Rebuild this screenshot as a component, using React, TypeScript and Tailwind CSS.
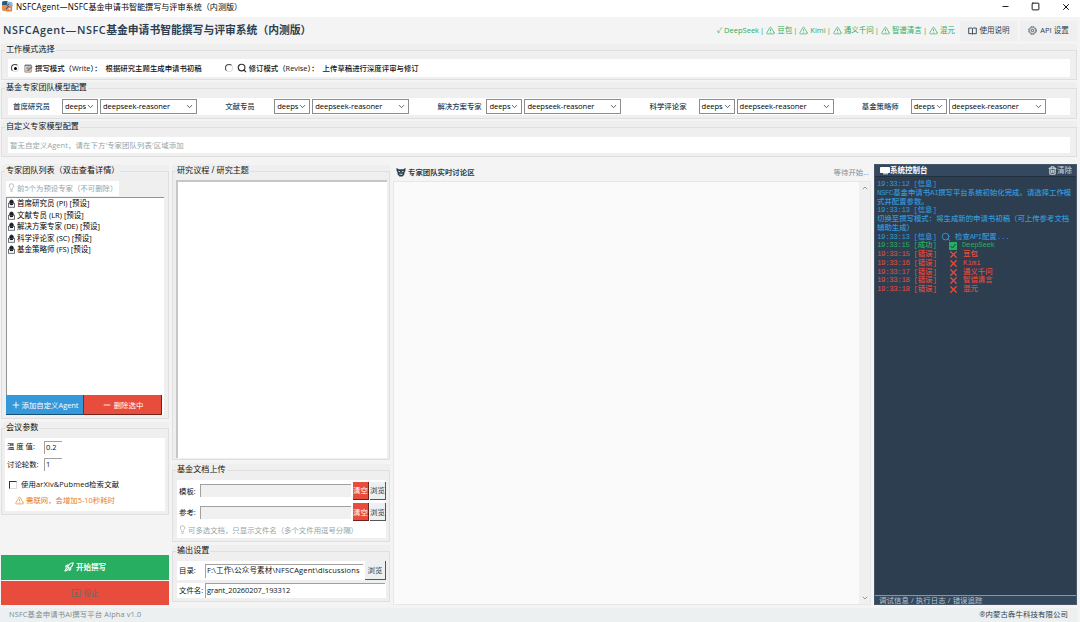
import type { ReactNode } from "react";
import { ChevronDown, ChevronUp, Lightbulb, Minus, Plus, Rocket, Search, Square, Trash2, TriangleAlert, X } from "lucide-react";

const sans = "font-['Open_Sans','Noto_Sans_CJK_SC',sans-serif]";
const mono = "font-['Liberation_Mono','Noto_Sans_CJK_SC',monospace]";

function Group({ title, className = "", children }: { title: string; className?: string; children: ReactNode }) {
  return (
    <section className={`relative shrink-0 bg-[#efefef] pt-[6px] ${className}`}>
      <div className="h-full border border-[#dfdfdf]">{children}</div>
      <h2 className="absolute left-[4px] top-[-1px] bg-[#efefef] px-px text-[8.1px] leading-[11px] text-[#111]">{title}</h2>
    </section>
  );
}

function Select({ value, className }: { value: string; className: string }) {
  return (
    <div className={`flex h-[15px] items-center justify-between border border-[#8c8c8c] bg-white pl-[2px] pr-[2px] text-[7.6px] text-black ${className}`}>
      <span className="pb-[2px] font-medium tracking-[-0.07px]">{value}</span>
      <ChevronDown size={9} strokeWidth={2.2} className="shrink-0 text-[#444]" />
    </div>
  );
}

function Entry({ className = "", children }: { className?: string; children?: ReactNode }) {
  return <div className={`flex items-center overflow-hidden whitespace-nowrap border-l border-t border-[#a0a0a0] pb-[2px] pl-px text-[7.5px] text-[#111] ${className}`}>{children}</div>;
}

function Raised({ className = "", children }: { className?: string; children: ReactNode }) {
  return <button className={`flex shrink-0 items-center justify-center overflow-hidden whitespace-nowrap border-b border-r text-[7.4px] ${className}`}>{children}</button>;
}

const experts = [
  { name: "首席研究员", code: "PI" },
  { name: "文献专员", code: "LR" },
  { name: "解决方案专家", code: "DE" },
  { name: "科学评论家", code: "SC" },
  { name: "基金策略师", code: "FS" },
];

function LockIcon() {
  return (
    <svg viewBox="0 0 8 10" className="h-[9px] w-[7px] shrink-0">
      <path d="M2 5V3a2 2 0 0 1 4 0v2z" fill="#26181a" stroke="#222" strokeWidth="1" />
      <rect x=".6" y="4.8" width="6.8" height="4.5" fill="#fff" stroke="#54616f" strokeWidth="1" />
      <path d="M2.2 5h3.6v1.8H2.2z" fill="#1e1616" />
    </svg>
  );
}

function AppIcon() {
  return (
    <svg viewBox="0 0 12 12" className="h-[11px] w-[11px]">
      <rect x="0" y="0" width="11.5" height="11.5" rx="2" fill="#e8eef4" />
      <path d="M0 2Q0 0 2 0h4v5H0z" fill="#24618e" />
      <path d="M0 5h6v6H2Q0 11 0 9z" fill="#ef8f43" />
      <path d="M6 1h4q1.500 0 1.500 2v3H6z" fill="#8cb8dc" />
      <path d="M5 5h6v5q0 1.500-1.500 1.500H5z" fill="#f27c38" />
      <path d="M2 4l2-2 2 3 2-2M4 9l3-3 3 3" fill="none" stroke="#244f79" strokeWidth="1" />
      <path d="M8.500 7v3M7 8.500h3" stroke="#fff" strokeWidth=".8" />
    </svg>
  );
}

function MemoIcon() {
  return (
    <svg viewBox="0 0 10 10" className="h-[9px] w-[9px]">
      <path d="M1 1.200h7v7.800H1z" fill="#eee" stroke="#666" strokeWidth=".8" />
      <path d="M1 1.500h7M2.500 3.500h4M2.500 5.200h3M2.500 7h2" stroke="#555" strokeWidth=".8" />
      <path d="M4.800 7.200l4.200-4.500" stroke="#777" strokeWidth="1.600" />
      <path d="M4.500 7.600l1-1" stroke="#d0623a" strokeWidth="1.600" />
    </svg>
  );
}

function BookIcon() {
  return (
    <svg viewBox="0 0 10 9" className="h-[8px] w-[9px]">
      <path d="M.7 1.200h3.400l.9.5.9-.5h3.400v6.300H5.900L5 8l-.9-.5H.7zM5 1.700V8" fill="none" stroke="#2c3e50" strokeWidth="1" />
    </svg>
  );
}

function GearIcon() {
  return (
    <svg viewBox="0 0 10 10" className="h-[9px] w-[9px]">
      <circle cx="5" cy="5" r="4.200" fill="none" stroke="#2c3e50" strokeWidth="1" strokeDasharray="1.600 .6" />
      <circle cx="5" cy="5" r="3.300" fill="none" stroke="#2c3e50" strokeWidth=".5" />
      <circle cx="5" cy="5" r="1.300" fill="none" stroke="#2c3e50" strokeWidth=".9" />
    </svg>
  );
}

function MaskIcon() {
  return (
    <svg viewBox="0 0 10 10" className="h-[10px] w-[10px]">
      <path d="M.5.8l2 1.400h5l2-1.400v3l-.8 1.200-.5 2.800L6.500 9.500h-3L1.800 7.800 1.300 5 .5 3.800z" fill="#2c3e50" />
      <path d="M2.500 4.300l1.700.6M7.500 4.300l-1.700.6M3.500 7.200h3" stroke="#f4f4f4" strokeWidth=".9" />
    </svg>
  );
}

function Warn() {
  return <TriangleAlert size={9} strokeWidth={1.8} className="inline-block shrink-0" />;
}

const services = ["豆包", "Kimi", "通义千问", "智谱清言", "混元"];
const errors = [
  { time: "19:33:15", name: "豆包" },
  { time: "19:33:16", name: "Kimi" },
  { time: "19:33:17", name: "通义千问" },
  { time: "19:33:18", name: "智谱清言" },
  { time: "19:33:18", name: "混元" },
];

function Stamp({ time, level }: { time: string; level: string }) {
  return (
    <span className="inline-block w-[68px]">
      <span className="tracking-[-0.37px]">{time} [</span>{level}]
    </span>
  );
}

export default function App() {
  return (
    <div className={`flex h-[622px] w-[1080px] flex-col overflow-hidden whitespace-nowrap bg-[#f4f4f4] text-[7.5px] leading-[10px] text-[#111] ${sans}`}>
      <header className="flex h-[17px] shrink-0 items-center bg-white pb-[4px] pl-[2px]">
        <AppIcon />
        <span className="ml-[3px] text-[8.1px] text-black"><span className="tracking-[0.2px]">NSFCAgent—NSFC</span>基金申请书智能撰写与评审系统（内测版）</span>
        <div className="ml-auto flex items-center gap-[21px] pr-[9px] text-[#111]">
          <Minus size={9} strokeWidth={2.4} />
          <Square size={9} strokeWidth={2.6} />
          <X size={10} strokeWidth={2.4} />
        </div>
      </header>

      <div className="flex h-[27px] shrink-0 items-center pl-[3px] pr-[3px]">
        <h1 className="pb-px text-[10.8px] font-semibold leading-[14px] text-[#2c3e50]"><span className="tracking-[0.57px]">NSFCAgent—NSFC</span>基金申请书智能撰写与评审系统（内测版）</h1>
        <div className="ml-auto flex items-center pb-px text-[7.5px] text-[#27ae60]">
          <span>✓ DeepSeek</span>
          {services.map((s) => (
            <span key={s} className="flex items-center">
              <span className="pl-px pr-[2px]">|</span>
              <Warn />
              <span className="ml-[2px]">{s}</span>
            </span>
          ))}
        </div>
        <button className="ml-[5px] flex h-[20px] w-[57px] items-center justify-center gap-[3px] bg-[#efefef] text-[#2c3e50]">
          <BookIcon /><span className="pb-px">使用说明</span>
        </button>
        <button className="ml-[3px] flex h-[20px] w-[57px] items-center justify-center gap-[3px] bg-[#efefef] text-[#2c3e50]">
          <GearIcon /><span className="pb-px">API 设置</span>
        </button>
      </div>

      <div className="flex shrink-0 flex-col gap-[2px] pl-px pr-[3px]">
        <Group title="工作模式选择" className="h-[36px]">
          <div className="ml-[6px] mr-[6px] mt-[8px] flex h-[18px] items-center bg-white pl-[3px] text-[7.4px] font-medium">
            <i className="flex h-[8px] w-[8px] items-center justify-center rounded-full border border-[#ddd] border-l-[#444] border-t-[#444]"><b className="h-[3px] w-[3px] rounded-full bg-black" /></i>
            <span className="ml-[5px]"><MemoIcon /></span>
            <span className="ml-[2px]">撰写模式（Write）：</span>
            <span className="ml-[4px]">根据研究主题生成申请书初稿</span>
            <i className="ml-[23px] h-[8px] w-[8px] rounded-full border border-[#ddd] border-l-[#444] border-t-[#444]" />
            <Search size={10} strokeWidth={2.8} className="ml-[4px] text-[#333]" />
            <span className="ml-[2px]">修订模式（Revise）：</span>
            <span className="ml-[4px]">上传草稿进行深度评审与修订</span>
          </div>
        </Group>
        <Group title="基金专家团队模型配置" className="h-[37px]">
          <div className="ml-[6px] mr-[6px] mt-[9px] flex h-[17px] items-center bg-white pl-[5px]">
            {experts.map((e) => (
              <div key={e.code} className="flex w-[212.2px] shrink-0 items-center text-[#2c3e50]">
                <span className="w-[49px] pb-px text-[7.4px] font-medium">{e.name}</span>
                <Select value="deeps" className="w-[36px]" />
                <Select value="deepseek-reasoner" className="ml-[2px] w-[97px]" />
              </div>
            ))}
          </div>
        </Group>
        <Group title="自定义专家模型配置" className="h-[36px]">
          <div className="ml-[6px] mr-[6px] mt-[9px] flex h-[16px] items-center bg-white pb-px pl-[2px] text-[7.4px] tracking-[0.1px] text-[#95a5a6]">
            暂无自定义Agent，请在下方'专家团队列表'区域添加
          </div>
        </Group>
      </div>

      <main className="mt-[8px] flex h-[441px] shrink-0 pr-[3px]">
        <aside className="flex w-[169px] shrink-0 flex-col pl-px">
          <Group title="专家团队列表（双击查看详情）" className="h-[254px]">
            <div className="ml-[4px] mr-[4px] mt-[9px]">
              <div className="flex h-[15px] w-[113px] items-center bg-white pb-[2px] pl-px text-[7.4px] text-[#95a5a6]">
                <Lightbulb size={9} strokeWidth={1.8} className="shrink-0" /><span className="ml-px">前5个为预设专家（不可删除）</span>
              </div>
              <div className="mt-px h-[198px] border-l border-t border-[#929292] bg-white">
                {experts.map((e) => (
                  <div key={e.code} className="flex h-[11.5px] items-center gap-[2px] pl-px text-[7.5px] text-black">
                    <LockIcon /><span className="pb-px">{e.name} ({e.code}) [预设]</span>
                  </div>
                ))}
              </div>
              <div className="flex h-[20px] bg-white">
                <Raised className="w-[78px] gap-px border-[#174f78] bg-[#3498db] text-white"><Plus size={10} strokeWidth={2.2} />添加自定义Agent</Raised>
                <Raised className="w-[78px] gap-[2px] border-[#752018] bg-[#e74c3c] text-white"><Minus size={10} strokeWidth={2.2} />删除选中</Raised>
              </div>
            </div>
          </Group>

          <Group title="会议参数" className="mt-[3px] h-[93px]">
            <div className="ml-[3px] mr-[3px] mt-[9px] flex h-[73px] flex-col bg-white pl-[2px] text-[7.4px]">
              <div className="mt-[2px] flex h-[14px] items-center"><span className="w-[37px] pb-[2px]">温 度 值:</span><Entry className="h-[13px] w-[18px]">0.2</Entry></div>
              <div className="mt-[3px] flex h-[14px] items-center"><span className="w-[37px] pb-px">讨论轮数:</span><Entry className="h-[13px] w-[18px]">1</Entry></div>
              <div className="mt-[7px] flex h-[13px] items-center"><i className="ml-[2px] h-[8px] w-[8px] border border-[#ddd] border-l-[#333] border-t-[#333]" /><span className="ml-[4px] pb-[2px] tracking-[0.14px]">使用arXiv&amp;Pubmed检索文献</span></div>
              <div className="mt-[3px] flex h-[13px] items-center pb-px pl-[8px] text-[#e67e22]"><Warn /><span className="ml-[2px]">需联网，会增加5-10秒耗时</span></div>
            </div>
          </Group>
          <button className="mt-[40px] flex h-[25px] shrink-0 items-center justify-center gap-[2px] bg-[#27ae60] pb-px text-[7.5px] font-semibold text-white"><Rocket size={10} strokeWidth={2.6} />开始撰写</button>
          <button className="mt-px flex h-[24px] shrink-0 items-center justify-center gap-[3px] bg-[#e74c3c] text-[7.5px] font-semibold text-[#8a625c]">
            <i className="flex h-[8px] w-[9px] items-center justify-center border border-[#8a625c]"><b className="h-[3px] w-[3px] bg-[#8a625c]" /></i>停止
          </button>
        </aside>

        <section className="ml-[3px] flex w-[218px] shrink-0 flex-col">
          <Group title="研究议程 / 研究主题" className="h-[295px]">
            <div className="ml-[3px] mt-[8px] h-[278px] w-[211px] border-l-2 border-t-2 border-[#c6c6c6] bg-white" />
          </Group>
          <Group title="基金文档上传" className="mt-[4px] h-[78px]">
            <div className="ml-[4px] mt-[9px] h-[58px] w-[209px] bg-white text-[7.4px]">
              {["模板:", "参考:"].map((label) => (
                <div key={label} className="flex h-[21.500px] items-center pl-[2px]">
                  <span className="w-[21px] shrink-0">{label}</span>
                  <Entry className="h-[13px] w-[151px] bg-[#f0f0f0]" />
                  <Raised className="ml-[2px] h-[18px] w-[16px] border-[#752018] bg-[#e74c3c] text-white">清空</Raised>
                  <Raised className="ml-px h-[18px] w-[16px] border-[#555] bg-[#ecf0f1] text-[#2c3e50]">浏览</Raised>
                </div>
              ))}
              <div className="flex h-[15px] items-center pb-[2px] pl-px text-[#95a5a6]"><Lightbulb size={9} strokeWidth={1.8} className="shrink-0" /><span className="ml-px">可多选文档，只显示文件名（多个文件用逗号分隔）</span></div>
            </div>
          </Group>
          <Group title="输出设置" className="mt-[3px] h-[57px]">
            <div className="ml-[4px] mt-[9px] w-[209px] text-[7.4px]">
              <div className="flex h-[19px] items-center bg-white pl-[2px]">
                <span className="w-[26px] shrink-0 pb-px">目录:</span>
                <Entry className="h-[14px] w-[158px] shrink-0"><span className="tracking-[0.14px]">F:\工作\公众号素材\NFSCAgent\discussions</span></Entry>
                <Raised className="ml-[2px] h-[19px] w-[21px] border-[#555] bg-[#ecf0f1] text-[#2c3e50]">浏览</Raised>
              </div>
              <div className="mt-[3px] flex h-[15px] items-center bg-white pl-[2px]">
                <span className="w-[26px] shrink-0 pb-px">文件名:</span>
                <Entry className="h-[15px] w-[180px]"><span className="tracking-[-0.1px]">grant_20260207_193312</span></Entry>
              </div>
            </div>
          </Group>
        </section>

        <section className="ml-[3px] flex w-[478px] shrink-0 flex-col">
          <div className="flex h-[16px] shrink-0 items-center pb-[3px] pl-[3px] text-[7.4px] text-[#2c3e50]">
            <MaskIcon /><span className="ml-[2px] font-semibold">专家团队实时讨论区</span>
            <span className="ml-auto pr-[2px] text-[#7f8c8d]">等待开始...</span>
          </div>
          <div className="flex h-[424px] border border-[#e7e7e7] bg-[#fafafa]">
            <div className="ml-auto flex w-[11px] flex-col items-center justify-between bg-[#f0f0f0] py-[2px] text-[#999]"><ChevronUp size={8} strokeWidth={3} /><ChevronDown size={8} strokeWidth={3} /></div>
          </div>
        </section>

        <section className="ml-[3px] mt-[-1px] flex h-[441px] w-[203px] shrink-0 flex-col border border-[#465869] bg-[#2c3e50]">
          <div className="flex h-[12px] shrink-0 items-center border-b border-[#22313f] bg-[#34495e] pl-[5px] pr-[4px] text-[7.5px] text-white">
            <svg viewBox="0 0 10 8" className="h-[8px] w-[10px]"><path d="M.5.5h9v5h-9zM3 6.800h5" fill="#fff" stroke="#fff" /></svg>
            <b className="pb-px font-semibold">系统控制台</b>
            <span className="ml-auto flex items-center pb-px text-[#d2dadd]"><Trash2 size={9} strokeWidth={3.2} />清除</span>
          </div>
          <div className={`min-h-0 flex-1 whitespace-normal pl-[2px] pt-[3px] text-[7.4px] font-medium leading-[8.77px] text-[#3498db] ${mono}`}>
            <div><Stamp time="19:33:12" level="信息" /></div>
            <div className="whitespace-nowrap"><span className="tracking-[-0.4px]">NSFC</span>基金申请书<span className="tracking-[-0.4px]">AI</span>撰写平台系统初始化完成。请选择工作模<br />式并配置参数。</div>
            <div><Stamp time="19:33:13" level="信息" /></div>
            <div className="whitespace-nowrap">切换至撰写模式：将生成新的申请书初稿（可上传参考文档<br />辅助生成）</div>
            <div className="flex h-[8.77px] items-center whitespace-nowrap"><Stamp time="19:33:13" level="信息" /><Search size={10} strokeWidth={2.2} className="ml-[-4px] mr-[4px]" /><span>检查<span className="tracking-[-0.4px]">API</span>配置<span className="tracking-[-0.2px]">...</span></span></div>
            <div className="flex h-[8.77px] items-center whitespace-nowrap text-[#27ae60]">
              <Stamp time="19:33:15" level="成功" />
              <svg viewBox="0 0 8 8" className="ml-[4px] mr-[5px] h-[8px] w-[8px]"><rect width="8" height="8" fill="#27ae60" /><path d="M1.500 4l2 2 3-4" fill="none" stroke="#2c3e50" /></svg>
              <span className="tracking-[-0.35px]">DeepSeek</span>
            </div>
            {errors.map((e) => (
              <div key={e.name} className="flex h-[8.77px] items-center whitespace-nowrap text-[#e74c3c]">
                <Stamp time={e.time} level="错误" /><X size={11} strokeWidth={2.8} className="ml-[3px] mr-[4px]" /><span>{e.name}</span>
              </div>
            ))}
          </div>
          <div className="flex h-[9px] shrink-0 items-center border-t border-[#8996a1] bg-[#34495e] pl-[4px] text-[7.4px] leading-[8px] tracking-[0.1px] text-[#bdc3c7]">调试信息 / 执行日志 / 错误追踪</div>
        </section>
      </main>

      <footer className="mr-[3px] mt-[2px] flex h-[14px] shrink-0 items-center justify-between bg-[#ecf0f1] pb-[2px] pl-[9px] pr-[9px] text-[7.4px]">
        <span className="tracking-[0.13px] text-[#7f8c8d]">NSFC基金申请书AI撰写平台 Alpha v1.0</span>
        <span className="tracking-[0.1px] text-[#2c3e50]">®内蒙古犇牛科技有限公司</span>
      </footer>
    </div>
  );
}
